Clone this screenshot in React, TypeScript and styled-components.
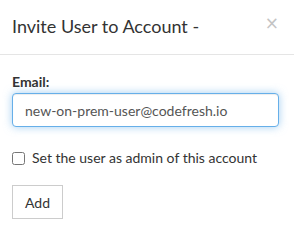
import React from "react"
import styled, {createGlobalStyle} from "styled-components"

const GlobalStyle = createGlobalStyle`
  html, body {
    margin: 0;
    padding: 0;
    background: #ffffff;
  }
  body {
    font-family: Lato, "Noto Sans", sans-serif;
    font-size: 14px;
    line-height: 20px;
    color: #333333;
  }
  * {
    box-sizing: border-box;
  }
`

export default function App() {
    return (
        <>
            <GlobalStyle/>
            <Modal>
                <Header>
                    <Title>Invite User to Account -</Title>
                    <CloseButton type="button">×</CloseButton>
                </Header>
                <Body>
                    <Label htmlFor="email">Email:</Label>
                    <EmailInput
                        id="email"
                        type="text"
                        defaultValue="new-on-prem-user@codefresh.io"
                    />
                    <CheckRow>
                        <CheckBox type="checkbox"/>
                        <span>Set the user as admin of this account</span>
                    </CheckRow>
                    <Button type="button">Add</Button>
                </Body>
            </Modal>
        </>
    )
}

const Modal = styled.div`
  width: 294px;
  height: 245px;
  background: #ffffff;
`
const Header = styled.div`
  display: flex;
  align-items: flex-start;
  justify-content: space-between;
  padding: 13px 15px 15px 12px;
  border-bottom: 1px solid #e5e5e5;
`
const Title = styled.h4`
  margin: 0;
  font-size: 18px;
  line-height: 26px;
  font-weight: 400;
  color: #333333;
`
const CloseButton = styled.button`
  border: 0;
  background: transparent;
  padding: 0;
  margin: 0;
  font-family: "DejaVu Sans", sans-serif;
  font-size: 17px;
  line-height: 20px;
  color: #c4c4c4;
  cursor: pointer;
`
const Body = styled.div`
  display: flex;
  flex-direction: column;
  align-items: flex-start;
  padding: 17px 15px 0 12px;
`
const Label = styled.label`
  font-weight: 700;
  margin-bottom: 1px;
`
const EmailInput = styled.input`
  width: 100%;
  height: 34px;
  padding: 6px 12px;
  font-family: Lato, "Noto Sans", sans-serif;
  font-size: 14px;
  color: #555555;
  border: 1px solid #66afe9;
  border-radius: 4px;
  outline: none;
  box-shadow: inset 0 1px 1px rgba(0, 0, 0, .075), 0 0 8px rgba(102, 175, 233, .6);
`
const CheckRow = styled.label`
  display: flex;
  align-items: center;
  gap: 7px;
  margin-top: 21px;
  font-weight: 400;
`
const CheckBox = styled.input`
  width: 13px;
  height: 13px;
  margin: 0;
`
const Button = styled.button`
  margin-top: 17px;
  height: 34px;
  padding: 6px 12px;
  font-family: Lato, "Noto Sans", sans-serif;
  font-size: 14px;
  color: #333333;
  background: #ffffff;
  border: 1px solid #cccccc;
  border-radius: 0;
`
